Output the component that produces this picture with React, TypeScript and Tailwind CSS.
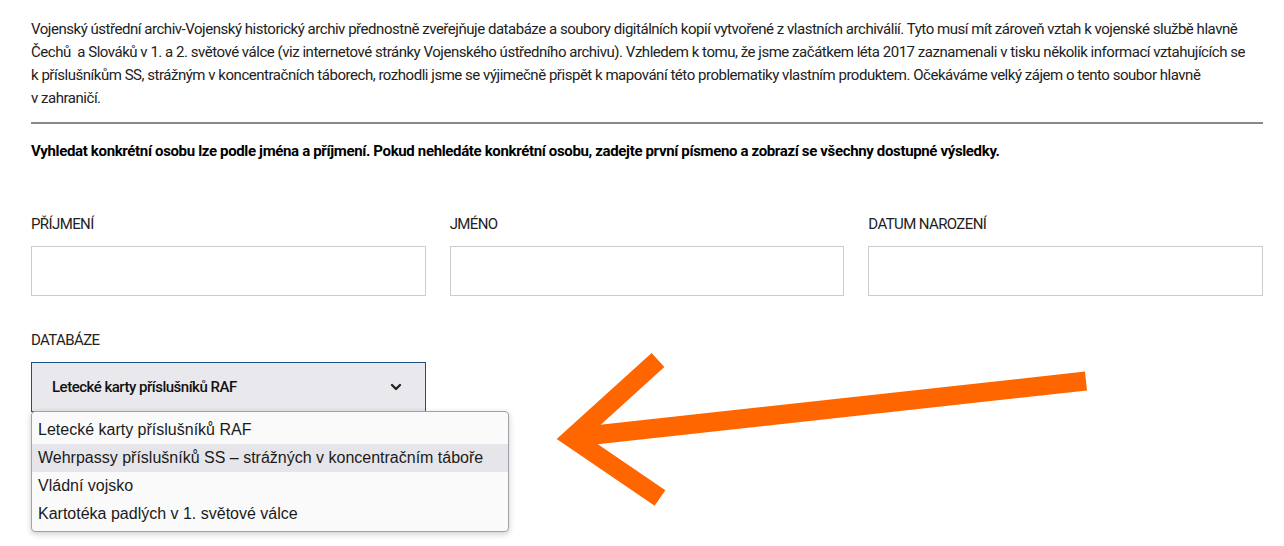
import { ChevronDown } from "lucide-react";

const FONT = 'Roboto, "Noto Sans", sans-serif';

const options = [
  "Letecké karty příslušníků RAF",
  "Wehrpassy příslušníků SS – strážných v koncentračním táboře",
  "Vládní vojsko",
  "Kartotéka padlých v 1. světové válce",
];

const intro = [
  "Vojenský ústřední archiv-Vojenský historický archiv přednostně zveřejňuje databáze a soubory digitálních kopií vytvořené z vlastních archiválií. Tyto musí mít zároveň vztah k vojenské službě hlavně",
  "Čechů\u00a0 a Slováků v 1. a 2. světové válce (viz internetové stránky Vojenského ústředního archivu). Vzhledem k tomu, že jsme začátkem léta 2017 zaznamenali v tisku několik informací vztahujících se",
  "k příslušníkům SS, strážným v koncentračních táborech, rozhodli jsme se výjimečně přispět k mapování této problematiky vlastním produktem. Očekáváme velký zájem o tento soubor hlavně",
  "v zahraničí.",
];

function Field({ label }: { label: string }) {
  return (
    <div className="flex flex-col gap-3">
      <label className="text-[15px] leading-5 tracking-[-0.6px] uppercase text-[#222]">{label}</label>
      <input type="text" className="h-[50px] w-full border border-[#cccccc] bg-white outline-none" />
    </div>
  );
}

export default function App() {
  return (
    <div className="relative min-h-screen w-full overflow-hidden bg-white text-[#222]" style={{ fontFamily: FONT }}>
      <div className="ml-[31px] w-[1232px] pt-[18px]">
        <div className="text-[15px] leading-[23px] tracking-[-0.47px]">
          {intro.map((line) => (
            <p key={line} className="whitespace-nowrap">
              {line}
            </p>
          ))}
        </div>

        <hr className="mt-[12px] border-t-2 border-[#888]" />

        <p className="mt-[17px] whitespace-nowrap text-[15px] font-bold leading-5 tracking-[-0.35px] text-black">
          Vyhledat konkrétní osobu lze podle jména a příjmení. Pokud nehledáte konkrétní osobu, zadejte první písmeno a zobrazí se všechny dostupné výsledky.
        </p>

        <div className="mt-[53px] grid grid-cols-3 gap-6">
          <Field label="Příjmení" />
          <Field label="Jméno" />
          <Field label="Datum narození" />
        </div>

        <div className="mt-[34px] flex flex-col gap-3">
          <span className="text-[15px] leading-5 tracking-[-0.6px] uppercase">Databáze</span>
          <div className="relative w-[395px]">
            <div className="flex h-[50px] items-center justify-between border border-[#1f4f7f] bg-[#e9e9ed] pl-5 pr-[21px]">
              <span className="text-[15px] font-medium tracking-[-0.5px] text-[#111]">Letecké karty příslušníků RAF</span>
              <ChevronDown className="h-4 w-4 text-[#222]" strokeWidth={3.5} />
            </div>
            <ul
              className="absolute left-0 top-[49px] z-10 w-[478px] rounded border border-[#a0a0a8] bg-[#fafafa] pt-[4px] pb-[3px] shadow-[0_2px_6px_rgba(0,0,0,0.2)]"
              style={{ fontFamily: '"Liberation Sans", Arial, sans-serif' }}
            >
              {options.map((o, i) => (
                <li
                  key={o}
                  className={`flex h-[28px] items-center px-[6px] text-[16px] text-[#1a1a1a] ${i === 1 ? "bg-[#e6e6ea]" : ""}`}
                >
                  {o}
                </li>
              ))}
            </ul>
          </div>
        </div>
      </div>

      <svg className="pointer-events-none absolute left-0 top-0" width="1284" height="546" viewBox="0 0 1284 546">
        <g stroke="#ff6600" strokeWidth="19" fill="none">
          <line x1="1086" y1="381" x2="576" y2="437" strokeLinecap="butt" />
          <polyline points="658,360 572,438 660,498" strokeLinejoin="miter" strokeLinecap="butt" />
        </g>
      </svg>
    </div>
  );
}
